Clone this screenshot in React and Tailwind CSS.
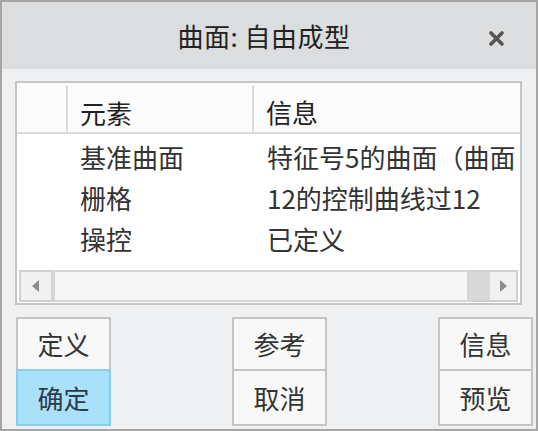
const font = { fontFamily: '"Noto Sans CJK SC", "Noto Sans", sans-serif' };

const rows = [
  ['基准曲面', '特征号5的曲面（曲面'],
  ['栅格', '12的控制曲线过12'],
  ['操控', '已定义'],
];

const Btn = ({ children, active, className = '' }) => (
  <div
    className={`flex items-center justify-center w-[95px] border-2 text-[26px] leading-none ${
      active ? 'bg-[#a9e0fa] border-[#86cdef] text-[#2f3b47]' : 'bg-[#f8f8f8] border-[#c4c4c4] text-[#333]'
    } ${className}`}
  >
    {children}
  </div>
);

export default function App() {
  return (
    <div className="w-[538px] h-[431px] border-2 border-[#a5a5a5] bg-[#eff0f1] flex flex-col overflow-hidden" style={font}>
      {/* Title bar */}
      <div className="relative h-[67px] bg-[#dcdddf] flex items-center justify-center shrink-0">
        <span className="text-[26px] leading-none text-[#222] mr-[10px] tracking-[0.5px]">曲面: 自由成型</span>
        <svg className="absolute right-[31px] top-[28px]" width="17" height="17" viewBox="0 0 17 17">
          <path d="M3 3 L14 14 M14 3 L3 14" stroke="#555" strokeWidth="3.6" strokeLinecap="round" />
        </svg>
      </div>

      {/* Body */}
      <div className="px-[13px] pt-[12px] flex flex-col">
        <div className="h-[224px] w-[507px] border-2 border-[#c4c4c4] bg-white flex flex-col">
          <div className="grid grid-cols-[51px_186px_1fr] h-[51px] border-b-2 border-[#dcdcdc] bg-[#fcfcfc] text-[26px] leading-none text-[#222]">
            <div className="border-r-2 border-[#dcdcdc] mt-[2px]" />
            <div className="border-r-2 border-[#dcdcdc] mt-[2px] flex items-center pl-[12px] pt-[8px]">元素</div>
            <div className="flex items-center pl-[12px] pt-[8px] whitespace-nowrap overflow-hidden">信息</div>
          </div>
          <div className="flex-1 flex flex-col pt-[2px]">
            {rows.map(([a, b]) => (
              <div key={a} className="grid grid-cols-[51px_186px_1fr] h-[41px] text-[26px] leading-none text-[#333]">
                <div />
                <div className="flex items-center pl-[12px]">{a}</div>
                <div className="flex items-center pl-[13px] whitespace-nowrap overflow-hidden">{b}</div>
              </div>
            ))}
          </div>
          {/* Horizontal scrollbar */}
          <div className="mx-[2px] mb-[1px] h-[32px] flex border-2 border-[#cfcfcf] bg-[#f1f1f1]">
            <div className="w-[32px] flex items-center justify-center border-r-2 border-[#d4d4d4]">
              <svg width="8" height="12" viewBox="0 0 8 12"><path d="M7 0 L0 6 L7 12 Z" fill="#8c8c8c" /></svg>
            </div>
            <div className="w-[416px] border-2 border-[#d6d6d6] bg-[#f6f6f6] -my-[2px]" />
            <div className="w-[21px] bg-[#d9d9d9]" />
            <div className="flex-1 flex items-center justify-center">
              <svg width="8" height="12" viewBox="0 0 8 12"><path d="M1 0 L8 6 L1 12 Z" fill="#8c8c8c" /></svg>
            </div>
          </div>
        </div>

        {/* Buttons */}
        <div className="flex mt-[12px] pl-[1px]">
          <div className="flex flex-col">
            <Btn className="h-[54px]">定义</Btn>
            <Btn active className="h-[57px] -mt-[2px]">确定</Btn>
          </div>
          <div className="flex flex-col ml-[121px]">
            <Btn className="h-[54px]">参考</Btn>
            <Btn className="h-[57px] -mt-[2px]">取消</Btn>
          </div>
          <div className="flex flex-col ml-[111px]">
            <Btn className="h-[54px]">信息</Btn>
            <Btn className="h-[57px] -mt-[2px]">预览</Btn>
          </div>
        </div>
      </div>
    </div>
  );
}
